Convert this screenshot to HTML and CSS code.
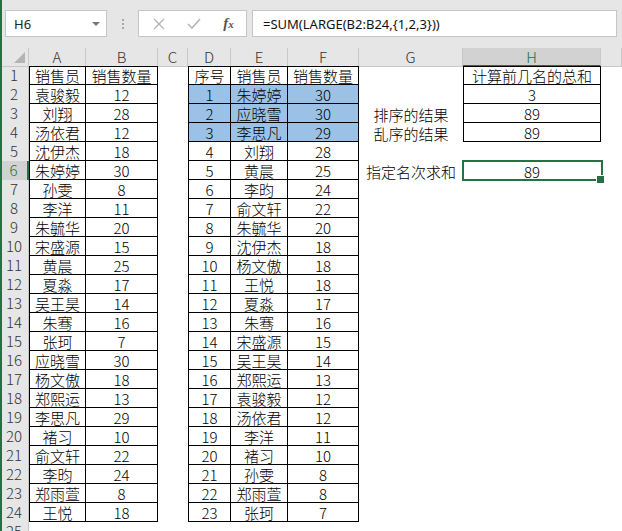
FILE: index.html
```html
<!DOCTYPE html>
<html lang="zh">
<head>
<meta charset="utf-8">
<title>Excel</title>
<link rel="stylesheet" href="styles.css">
</head>
<body>
<div class="top">
  <div class="namebox"><span>H6</span><span class="caret"></span></div>
  <div class="dots"><i></i><i></i><i></i></div>
  <div class="fbtns">
    <span class="slot"><svg width="12" height="12" viewBox="0 0 12 12"><path d="M1 1L11 11M11 1L1 11" stroke="#b4b4b4" stroke-width="1.3" fill="none"/></svg></span>
    <span class="slot"><svg width="14" height="11" viewBox="0 0 14 11"><path d="M1 6L5 10L13 1" stroke="#b4b4b4" stroke-width="1.6" fill="none"/></svg></span>
    <span class="slot fx">f<sub>x</sub></span>
  </div>
  <div class="finput">=SUM(LARGE(B2:B24,{1,2,3}))</div>
</div>
<div class="sheet">
  <div class="row hdr">
    <div class="corner"><span class="tri"></span></div>
    <div class="ch">A</div><div class="ch">B</div><div class="ch">C</div><div class="ch">D</div><div class="ch">E</div><div class="ch">F</div><div class="ch">G</div><div class="ch csel">H</div><div class="ch"></div>
  </div>
  <div class="row r1"><div class="rh">1</div><div class="c b l">销售员</div><div class="c b">销售数量</div><div class="c"></div><div class="c b l">序号</div><div class="c b">销售员</div><div class="c b">销售数量</div><div class="c"></div><div class="c b l">计算前几名的总和</div><div class="c"></div></div>
  <div class="row"><div class="rh">2</div><div class="c b l">袁骏毅</div><div class="c b">12</div><div class="c"></div><div class="c b l hl">1</div><div class="c b hl">朱婷婷</div><div class="c b hl">30</div><div class="c"></div><div class="c b l">3</div><div class="c"></div></div>
  <div class="row"><div class="rh">3</div><div class="c b l">刘翔</div><div class="c b">28</div><div class="c"></div><div class="c b l hl">2</div><div class="c b hl">应晓雪</div><div class="c b hl">30</div><div class="c">排序的结果</div><div class="c b l">89</div><div class="c"></div></div>
  <div class="row"><div class="rh">4</div><div class="c b l">汤依君</div><div class="c b">12</div><div class="c"></div><div class="c b l hl">3</div><div class="c b hl">李思凡</div><div class="c b hl">29</div><div class="c">乱序的结果</div><div class="c b l">89</div><div class="c"></div></div>
  <div class="row"><div class="rh">5</div><div class="c b l">沈伊杰</div><div class="c b">18</div><div class="c"></div><div class="c b l">4</div><div class="c b">刘翔</div><div class="c b">28</div><div class="c"></div><div class="c"></div><div class="c"></div></div>
  <div class="row"><div class="rh rsel">6</div><div class="c b l">朱婷婷</div><div class="c b">30</div><div class="c"></div><div class="c b l">5</div><div class="c b">黄晨</div><div class="c b">25</div><div class="c">指定名次求和</div><div class="c sel">89</div><div class="c"></div></div>
  <div class="row"><div class="rh">7</div><div class="c b l">孙雯</div><div class="c b">8</div><div class="c"></div><div class="c b l">6</div><div class="c b">李昀</div><div class="c b">24</div><div class="c"></div><div class="c"></div><div class="c"></div></div>
  <div class="row"><div class="rh">8</div><div class="c b l">李洋</div><div class="c b">11</div><div class="c"></div><div class="c b l">7</div><div class="c b">俞文轩</div><div class="c b">22</div><div class="c"></div><div class="c"></div><div class="c"></div></div>
  <div class="row"><div class="rh">9</div><div class="c b l">朱毓华</div><div class="c b">20</div><div class="c"></div><div class="c b l">8</div><div class="c b">朱毓华</div><div class="c b">20</div><div class="c"></div><div class="c"></div><div class="c"></div></div>
  <div class="row"><div class="rh">10</div><div class="c b l">宋盛源</div><div class="c b">15</div><div class="c"></div><div class="c b l">9</div><div class="c b">沈伊杰</div><div class="c b">18</div><div class="c"></div><div class="c"></div><div class="c"></div></div>
  <div class="row"><div class="rh">11</div><div class="c b l">黄晨</div><div class="c b">25</div><div class="c"></div><div class="c b l">10</div><div class="c b">杨文傲</div><div class="c b">18</div><div class="c"></div><div class="c"></div><div class="c"></div></div>
  <div class="row"><div class="rh">12</div><div class="c b l">夏淼</div><div class="c b">17</div><div class="c"></div><div class="c b l">11</div><div class="c b">王悦</div><div class="c b">18</div><div class="c"></div><div class="c"></div><div class="c"></div></div>
  <div class="row"><div class="rh">13</div><div class="c b l">吴王昊</div><div class="c b">14</div><div class="c"></div><div class="c b l">12</div><div class="c b">夏淼</div><div class="c b">17</div><div class="c"></div><div class="c"></div><div class="c"></div></div>
  <div class="row"><div class="rh">14</div><div class="c b l">朱骞</div><div class="c b">16</div><div class="c"></div><div class="c b l">13</div><div class="c b">朱骞</div><div class="c b">16</div><div class="c"></div><div class="c"></div><div class="c"></div></div>
  <div class="row"><div class="rh">15</div><div class="c b l">张珂</div><div class="c b">7</div><div class="c"></div><div class="c b l">14</div><div class="c b">宋盛源</div><div class="c b">15</div><div class="c"></div><div class="c"></div><div class="c"></div></div>
  <div class="row"><div class="rh">16</div><div class="c b l">应晓雪</div><div class="c b">30</div><div class="c"></div><div class="c b l">15</div><div class="c b">吴王昊</div><div class="c b">14</div><div class="c"></div><div class="c"></div><div class="c"></div></div>
  <div class="row"><div class="rh">17</div><div class="c b l">杨文傲</div><div class="c b">18</div><div class="c"></div><div class="c b l">16</div><div class="c b">郑熙运</div><div class="c b">13</div><div class="c"></div><div class="c"></div><div class="c"></div></div>
  <div class="row"><div class="rh">18</div><div class="c b l">郑熙运</div><div class="c b">13</div><div class="c"></div><div class="c b l">17</div><div class="c b">袁骏毅</div><div class="c b">12</div><div class="c"></div><div class="c"></div><div class="c"></div></div>
  <div class="row"><div class="rh">19</div><div class="c b l">李思凡</div><div class="c b">29</div><div class="c"></div><div class="c b l">18</div><div class="c b">汤依君</div><div class="c b">12</div><div class="c"></div><div class="c"></div><div class="c"></div></div>
  <div class="row"><div class="rh">20</div><div class="c b l">褚习</div><div class="c b">10</div><div class="c"></div><div class="c b l">19</div><div class="c b">李洋</div><div class="c b">11</div><div class="c"></div><div class="c"></div><div class="c"></div></div>
  <div class="row"><div class="rh">21</div><div class="c b l">俞文轩</div><div class="c b">22</div><div class="c"></div><div class="c b l">20</div><div class="c b">褚习</div><div class="c b">10</div><div class="c"></div><div class="c"></div><div class="c"></div></div>
  <div class="row"><div class="rh">22</div><div class="c b l">李昀</div><div class="c b">24</div><div class="c"></div><div class="c b l">21</div><div class="c b">孙雯</div><div class="c b">8</div><div class="c"></div><div class="c"></div><div class="c"></div></div>
  <div class="row"><div class="rh">23</div><div class="c b l">郑雨萱</div><div class="c b">8</div><div class="c"></div><div class="c b l">22</div><div class="c b">郑雨萱</div><div class="c b">8</div><div class="c"></div><div class="c"></div><div class="c"></div></div>
  <div class="row"><div class="rh">24</div><div class="c b l">王悦</div><div class="c b">18</div><div class="c"></div><div class="c b l">23</div><div class="c b">张珂</div><div class="c b">7</div><div class="c"></div><div class="c"></div><div class="c"></div></div>
  <div class="row"><div class="rh">25</div><div class="c"></div><div class="c"></div><div class="c"></div><div class="c"></div><div class="c"></div><div class="c"></div><div class="c"></div><div class="c"></div><div class="c"></div></div>
</div>
</body>
</html>
```
FILE: styles.css
```css
* { box-sizing: border-box; }
html, body { margin: 0; padding: 0; }
body {
  width: 622px;
  height: 531px;
  overflow: hidden;
  background: #fff;
  border-left: 2px solid #217346;
  font-family: "Noto Sans CJK SC", sans-serif;
  color: #000;
}
.top {
  height: 48px;
  background: #e6e6e6;
  display: flex;
  align-items: flex-start;
  padding-top: 10px;
}
.namebox {
  margin-left: 3px;
  width: 102px;
  height: 27px;
  background: #fff;
  border: 1px solid #c6c6c6;
  display: flex;
  align-items: center;
  justify-content: space-between;
  padding: 0 6px 0 8px;
  font: 13px "Noto Sans", sans-serif;
  color: #222;
}
.caret {
  width: 0; height: 0;
  border-left: 4px solid transparent;
  border-right: 4px solid transparent;
  border-top: 4px solid #777;
}
.dots {
  width: 31px;
  height: 27px;
  display: flex;
  flex-direction: column;
  align-items: center;
  gap: 2px;
  padding-top: 9px;
}
.dots i { display: block; width: 2px; height: 2px; background: #a6a6a6; }
.fbtns {
  width: 109px;
  height: 27px;
  background: #fff;
  border: 1px solid #c6c6c6;
  display: flex;
  align-items: center;
  padding-left: 2px;
}
.slot { width: 36px; display: flex; justify-content: center; align-items: center; }
.fx {
  font: italic 15px "Liberation Serif", serif;
  color: #555;
  font-weight: bold;
}
.fx sub { font-size: 11px; vertical-align: -1px; }
.finput {
  margin-left: 5px;
  width: 365px;
  height: 27px;
  background: #fff;
  border: 1px solid #c6c6c6;
  padding-left: 10px;
  font: 13px "Noto Sans", sans-serif;
  color: #111;
  display: flex;
  align-items: center;
}
.row {
  display: grid;
  grid-template-columns: 27px 57px 72px 30px 43px 57px 71px 104px 138px 21px;
  height: 19px;
}
.hdr { height: 18px; background: #e6e6e6; }
.corner { position: relative; border-right: 1px solid #c8c8c8; border-bottom: 1px solid #c8c8c8; }
.tri {
  position: absolute;
  right: 3px; bottom: 3px;
  width: 0; height: 0;
  border-left: 11px solid transparent;
  border-bottom: 11px solid #b4b4b4;
}
.ch {
  border-right: 1px solid #c8c8c8;
  border-bottom: 1px solid #c8c8c8;
  text-align: center;
  font-size: 15px;
  line-height: 17px;
  color: #333;
  font-weight: 300;
}
.csel { background: #d2d2d2; color: #217346; border-bottom: 2px solid #217346; }
.rh {
  background: #e6e6e6;
  border-right: 1px solid #c8c8c8;
  text-align: center;
  font-size: 15px;
  line-height: 18px;
  color: #333;
  padding-right: 2px;
  font-weight: 300;
}
.rsel { background: #d2d2d2; color: #217346; border-right: 2px solid #217346; }
.c {
  display: flex;
  justify-content: center;
  align-items: flex-end;
  font-size: 15px;
  line-height: 17px;
  font-weight: 300;
  white-space: nowrap;
}
.b { border-right: 1px solid #000; border-bottom: 1px solid #000; }
.l { border-left: 1px solid #000; }
.r1 .b { border-top: 1px solid #000; }
.hl { background: #9bc2e6; }
.sel { position: relative; }
.sel::after {
  content: "";
  position: absolute;
  left: -1px; top: -1px; right: -2px; bottom: -1px;
  border: 2px solid #217346;
}
.sel::before {
  content: "";
  position: absolute;
  right: -4px; bottom: -4px;
  width: 7px; height: 7px;
  background: #217346;
  border: 1px solid #fff;
  z-index: 2;
}
```
